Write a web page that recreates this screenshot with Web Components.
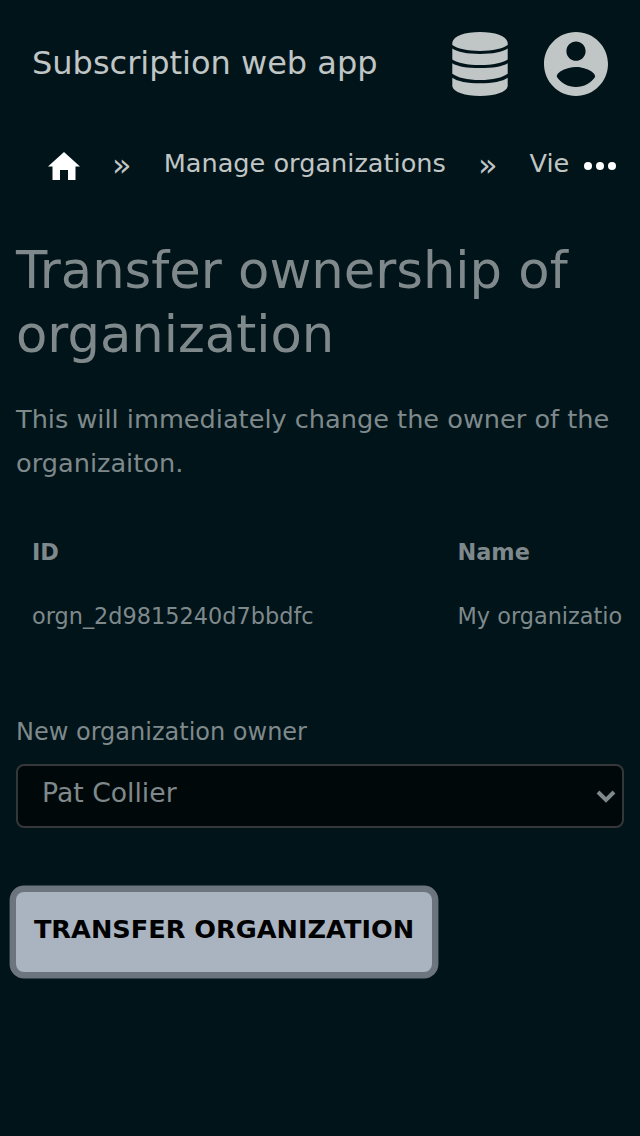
<!DOCTYPE html>
<html lang="en"><head><meta charset="utf-8"><title>Transfer ownership of organization</title>
<style>
html,body{margin:0;height:100%;overflow:hidden;background:#001419}
body{font-family:"DejaVu Sans",sans-serif;color:#7f898b}
</style></head><body>
<transfer-page></transfer-page>
<script>
const define=(name,html)=>customElements.define(name,class extends HTMLElement{
  constructor(){super();this.attachShadow({mode:'open'}).innerHTML=html;}
});
define('app-header',`<style>
:host{display:flex;height:128px;box-sizing:border-box;padding:0 32px;align-items:center;color:#c0c5c5;font-size:32px;line-height:48px}
span{flex:1;white-space:nowrap;margin-top:-2px}svg{display:block;fill:currentColor}.db{margin-right:36px}
</style><span><slot></slot></span>
<svg class="db" width="56" height="64" viewBox="0 0 56 64"><path d="M.3 10.500C1.500 4 13 0 28 0s26.500 4 27.700 10.500v2.500c-5 3.800-15 5.900-27.700 5.900S5.300 16.800.3 13zM.3 16.600c5 3.600 15 5.400 27.700 5.400s22.700-1.800 27.700-5.400v10.800c-5 3.500-15 5.500-27.700 5.500S5.300 30.900.3 27.400zM.3 31.200c5 3.200 15 4.900 27.700 4.900s22.700-1.700 27.700-4.900v10.500C50.700 45.500 40.700 48 28 48S5.300 45.500.3 41.700zM.3 45.700c5 3.600 15 5.600 27.700 5.600s22.700-2 27.700-5.600v8.600C54.500 60.300 43 64 28 64S1.500 60.300.3 54.300z"/></svg>
<svg width="64" height="64" viewBox="2 2 20 20"><path d="M12 2C6.48 2 2 6.48 2 12s4.48 10 10 10 10-4.48 10-10S17.52 2 12 2zm0 3c1.66 0 3 1.34 3 3s-1.34 3-3 3-3-1.34-3-3 1.34-3 3-3zm0 14.2c-2.5 0-4.71-1.28-6-3.22.03-1.99 4-3.08 6-3.08 1.99 0 5.97 1.09 6 3.08-1.29 1.94-3.5 3.22-6 3.22z"/></svg>`);
define('crumb-trail',`<style>
:host{display:flex;align-items:center;height:72px;padding:0 24px 0 48px;color:#c0c5c5;font-size:25.6px;line-height:44px}
.clip{display:flex;align-items:center;flex:1;min-width:0;overflow:hidden;white-space:nowrap}
svg{display:block;flex:none}.sep{font-size:32px;margin:2px 32.040px 0}
a{margin-top:-2px}.home{margin-top:4px}.more{margin:4px 0 0 14px}
</style><div class="clip">
<svg class="home" width="32" height="28" viewBox="0 0 32 28" fill="#fff"><path d="M16 0 32 14.5h-4.5V28H20V18h-8v10H4.500V14.500H0z"/></svg>
<span class="sep">»</span>
<a>Manage organizations</a>
<span class="sep">»</span>
<a>Vie</a></div>
<svg class="more" width="32" height="8" fill="#fff"><circle cx="4" cy="4" r="4"/><circle cx="16" cy="4" r="4"/><circle cx="28" cy="4" r="4"/></svg>`);
define('page-intro',`<style>
:host{display:block;padding:38px 16px 0}
h1{font-weight:400;font-size:51.2px;line-height:64px;margin:0}
p{font-size:25.6px;line-height:44px;margin:31px 0 0}
</style><h1><slot name="title"></slot></h1><p><slot></slot></p>`);
define('data-table',`<style>
:host{display:grid;grid-template-columns:425.500px 1fr;margin:35px 16px 0;padding-left:16px;overflow:hidden;font-size:22.4px;line-height:64px;white-space:nowrap}
b,span{overflow:hidden}
</style><b>ID</b><b>Name</b><span>orgn_2d9815240d7bbdfc</span><span>My organizatio</span>`);
define('owner-field',`<style>
:host{display:block;margin:64px 16px 0}
label{display:block;font-size:24px;line-height:40px}
div{display:flex;justify-content:space-between;box-sizing:border-box;height:64px;margin-top:12px;border:2px solid #34383b;border-radius:8px;background:#00080a;padding:0 6px 0 24px;font-size:26.667px;line-height:53px}
svg{margin-top:23px}
</style><label><slot></slot></label><div><span>Pat Collier</span>
<svg width="20" height="14" fill="none" stroke="#7f898b" stroke-width="4"><path d="m2 3 8 8 8-8"/></svg></div>`);
define('action-button',`<style>
:host{display:flex;margin:64px 16px 0}
button{font:bold 25.6px/74px "DejaVu Sans",sans-serif;width:416px;height:80px;border:0;border-radius:8px;padding:0 0 6px;background:#a9b4c0;color:#000;box-shadow:0 0 0 6.400px #6c757e;white-space:nowrap}
</style><button><slot></slot></button>`);
define('transfer-page',`<style>:host{display:block;width:640px;height:1136px;overflow:hidden}</style>
<app-header>Subscription web app</app-header><crumb-trail></crumb-trail>
<page-intro><span slot="title">Transfer ownership of organization</span>This will immediately change the owner of the organizaiton.</page-intro>
<data-table></data-table><owner-field>New organization owner</owner-field>
<action-button>TRANSFER ORGANIZATION</action-button>`);
</script></body></html>
